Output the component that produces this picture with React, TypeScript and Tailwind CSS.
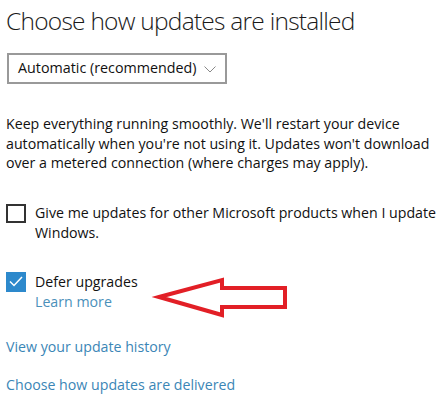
const font = { fontFamily: '"Open Sans", "Noto Sans", sans-serif' };

function Arrow() {
  // red annotation arrow drawn over the page
  return (
    <svg
      className="absolute left-[150px] top-[272px]"
      width="145"
      height="52"
      viewBox="0 0 145 52"
      fill="none"
    >
      <path
        d="M9 25 L72 8 L72 16 L135 16 L135 35 L72 35 L72 43 Z"
        stroke="#e21f26"
        strokeWidth="4"
        strokeLinejoin="miter"
      />
    </svg>
  );
}

export default function App() {
  return (
    <div className="relative w-[447px] h-[400px] overflow-hidden bg-white text-[#000]" style={font}>
      <div className="pl-[6px] pt-[4px]">
        <h1 className="text-[24.5px] font-light leading-[34px] tracking-[-0.75px] text-[#1a1a1a] whitespace-nowrap">
          Choose how updates are installed
        </h1>

        <div className="relative mt-[15px] ml-[1px] w-[220px] h-[31px] border-2 border-[#999999] flex items-center pl-[9px]">
          <span className="text-[14.3px] leading-none text-[#111] whitespace-nowrap">Automatic (recommended)</span>
          <svg className="absolute right-[9px] top-[11px]" width="12" height="7" viewBox="0 0 12 7" fill="none">
            <path d="M0.5 0.5 L6 6 L11.5 0.5" stroke="#888" strokeWidth="1" />
          </svg>
        </div>

        <p className="mt-[30px] text-[14.2px] leading-[19.5px] text-[#111] pr-[6px]">
          Keep everything running smoothly. We'll restart your device automatically when you're not using it. Updates won't download over a metered connection (where charges may apply).
        </p>

        <div className="mt-[30px] flex gap-[9px]">
          <div className="w-[20px] h-[19px] border-2 border-[#333] shrink-0 mt-[1px]" />
          <p className="text-[14.2px] leading-[20px] text-[#111]">
            Give me updates for other Microsoft products when I update Windows.
          </p>
        </div>

        <div className="mt-[29px] flex gap-[9px]">
          <div className="w-[20px] h-[20px] bg-[#2d89cc] shrink-0 flex items-center justify-center">
            <svg width="14" height="11" viewBox="0 0 14 11" fill="none">
              <path d="M1 5.5 L5 9.5 L13 1" stroke="white" strokeWidth="1.5" />
            </svg>
          </div>
          <div>
            <p className="text-[14.2px] leading-[20px] text-[#111]">Defer upgrades</p>
            <p className="text-[14.2px] leading-[20px] text-[#4a90ba]">Learn more</p>
          </div>
        </div>

        <p className="mt-[25px] text-[14.2px] leading-[20px] text-[#3b86b6]">View your update history</p>
        <p className="mt-[18px] text-[14.2px] leading-[20px] text-[#3b86b6]">Choose how updates are delivered</p>
      </div>
      <Arrow />
    </div>
  );
}
